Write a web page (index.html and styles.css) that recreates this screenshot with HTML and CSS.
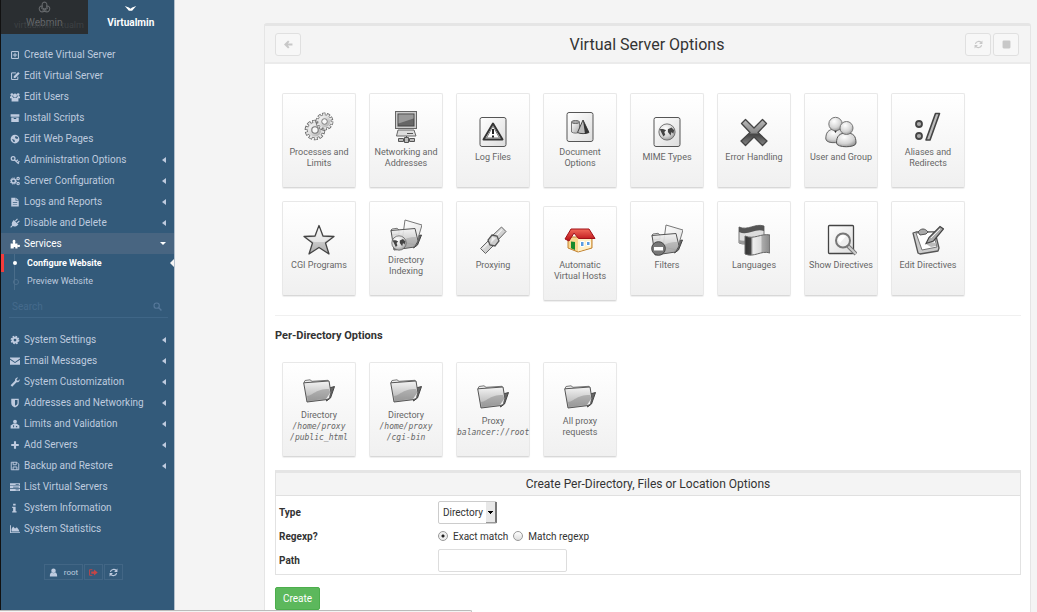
FILE: index.html
```html
<!DOCTYPE html>
<html lang="en">
<head>
<meta charset="utf-8">
<title>Virtual Server Options</title>
<link rel="stylesheet" href="styles.css">
</head>
<body>
<svg class="defs" aria-hidden="true">
  <defs>
    <linearGradient id="metal" x1="0" y1="0" x2="1" y2="1"><stop offset="0" stop-color="#fff"/><stop offset="1" stop-color="#aaa"/></linearGradient>
    <linearGradient id="paper" x1="0" y1="0" x2="1" y2="1"><stop offset="0" stop-color="#fff"/><stop offset="1" stop-color="#ddd"/></linearGradient>
    <linearGradient id="dark" x1="0" y1="0" x2="0" y2="1"><stop offset="0" stop-color="#bbb"/><stop offset=".5" stop-color="#888"/><stop offset=".58" stop-color="#444"/><stop offset="1" stop-color="#888"/></linearGradient>
    <linearGradient id="roof" x1="0" y1="0" x2="0" y2="1"><stop offset="0" stop-color="#f26a5a"/><stop offset="1" stop-color="#b80d14"/></linearGradient>
    <linearGradient id="flag" x1="0" y1="0" x2="1" y2="0"><stop offset="0" stop-color="#333"/><stop offset=".22" stop-color="#444"/><stop offset=".32" stop-color="#eee"/><stop offset=".62" stop-color="#ddd"/><stop offset=".7" stop-color="#aaa"/><stop offset="1" stop-color="#888"/></linearGradient>
    <radialGradient id="ball" cx=".4" cy=".3" r=".8"><stop offset="0" stop-color="#fff"/><stop offset=".6" stop-color="#d4d4d4"/><stop offset="1" stop-color="#888"/></radialGradient>
    <linearGradient id="folderfill" x1="0" y1="0" x2="0" y2="1"><stop offset="0" stop-color="#f4f4f4"/><stop offset="1" stop-color="#aaa"/></linearGradient>
  </defs>
  <symbol id="plus-square" viewBox="0 0 16 16"><path fill="none" stroke="currentColor" stroke-width="1.6" d="M2.5 2.5h11v11h-11zM8 4.5v7M4.5 8h7"/></symbol>
  <symbol id="edit" viewBox="0 0 16 16"><path fill="none" stroke="currentColor" stroke-width="1.6" d="M9.500 3H2.500v10.500h10V9"/><path fill="currentColor" d="M6 8.500l7-7 2.500 2.500-7 7H6z"/></symbol>
  <symbol id="users" viewBox="0 0 16 16"><circle cx="3" cy="4" r="2.200" fill="currentColor"/><circle cx="13" cy="4" r="2.200" fill="currentColor"/><circle cx="8" cy="5.500" r="3.200" fill="currentColor"/><path fill="currentColor" d="M0 10V7.500L2 6l2.500 1.500L5 9h6l.5-1.500L14 6l2 1.500V10h-2.500v5h-11v-5z"/></symbol>
  <symbol id="archive" viewBox="0 0 16 16"><path fill="currentColor" d="M1 2h14v4H1zM2 7h12v7.500H2zm4 1v1.500h4V8z" fill-rule="evenodd"/></symbol>
  <symbol id="globe" viewBox="0 0 16 16"><path fill="currentColor" fill-rule="evenodd" d="M8 1a7 7 0 100 14A7 7 0 008 1zm1 2l4 2-1 3-3-1-1-2zM3 8l4 1 1 3-2 1z"/></symbol>
  <symbol id="key" viewBox="0 0 16 16"><circle cx="5" cy="5.500" r="3" fill="none" stroke="currentColor" stroke-width="2"/><path fill="none" stroke="currentColor" stroke-width="2" d="M7 7.500l7 6.500M10 10l2.500-2.500M12.500 12.500L15 10"/></symbol>
  <symbol id="cogs" viewBox="0 0 16 16"><circle cx="5.500" cy="8" r="3.300" fill="none" stroke="currentColor" stroke-width="2.400"/><circle cx="5.500" cy="8" r="5" fill="none" stroke="currentColor" stroke-width="1.500" stroke-dasharray="2 1.900"/><circle cx="13" cy="4" r="1.900" fill="none" stroke="currentColor" stroke-width="1.800"/><circle cx="13" cy="12" r="1.900" fill="none" stroke="currentColor" stroke-width="1.800"/></symbol>
  <symbol id="file" viewBox="0 0 16 16"><path fill="currentColor" fill-rule="evenodd" d="M2 1h7v5h5v9H2zm8 0l4 4h-4zM4.500 8v1h7V8zm0 3v1h7v-1z"/></symbol>
  <symbol id="plug" viewBox="0 0 16 16"><path fill="none" stroke="currentColor" stroke-width="1.800" d="M1 15l4-4M8.500 5L12 1.500M11.500 8L15 4.500"/><path fill="currentColor" d="M6 3l7.500 7.500-1.500 1c-3 3-6 2.500-8 1-1.500-2-2-5 1-8z"/></symbol>
  <symbol id="puzzle" viewBox="0 0 16 16"><path fill="currentColor" d="M1 7h4c-1.500-3-1-6 1.500-6S9 4 8 7h4v3c2-1.500 4-1 4 1s-2 2.500-4 1v3H8.500c1-3-3.500-3-2.500 0H1z"/></symbol>
  <symbol id="search" viewBox="0 0 16 16"><circle cx="6.500" cy="6.500" r="4.700" fill="none" stroke="currentColor" stroke-width="2"/><path stroke="currentColor" stroke-width="2.500" d="M10 10l5 5"/></symbol>
  <symbol id="cog" viewBox="0 0 16 16"><circle cx="8" cy="8" r="3.800" fill="none" stroke="currentColor" stroke-width="3.200"/><circle cx="8" cy="8" r="6" fill="none" stroke="currentColor" stroke-width="2" stroke-dasharray="2.700 2.012"/></symbol>
  <symbol id="envelope" viewBox="0 0 16 16"><path fill="currentColor" d="M0 2.500h16V4L8 9.500 0 4zM0 5.800l8 5.500 8-5.500V14H0z"/></symbol>
  <symbol id="wrench" viewBox="0 0 16 16"><path fill="currentColor" d="M1 13l7-7c-.5-3 2-5.500 5-5L10.500 3.500l.5 2 2 .5L15.500 3.500c.5 3-2 5.500-5 5L3.500 15.500z"/></symbol>
  <symbol id="shield" viewBox="0 0 16 16"><path fill="currentColor" fill-rule="evenodd" d="M2 1h12v7c0 4-3 6-6 7-3-1-6-3-6-7zm6 2v9.500c2-1 4-2 4-4.500V3z"/></symbol>
  <symbol id="limits" viewBox="0 0 16 16"><circle cx="8" cy="4" r="3" fill="currentColor"/><path fill="currentColor" fill-rule="evenodd" d="M6 7h4l5 3.500V15H1v-4.500zM5 10v3h1.500v-3zm4.500 1v2h2v-2z"/></symbol>
  <symbol id="plus" viewBox="0 0 16 16"><path fill="currentColor" d="M6.300 2h3.400v4.300H14v3.400H9.700V14H6.300V9.700H2V6.300h4.300z"/></symbol>
  <symbol id="save" viewBox="0 0 16 16"><path fill="none" stroke="currentColor" stroke-width="1.500" d="M2 2h9l3 3v9H2zM5 2v4h5V2M5 14V9.500h6V14"/></symbol>
  <symbol id="server" viewBox="0 0 16 16"><path fill="currentColor" fill-rule="evenodd" d="M0 2h16v3.500H0zm9 1v1.200h5V3zM0 6.500h16V10H0zm5 1v1.200h9V7.500zM0 11h16v3.500H0zm9 1v1.200h5V12z"/></symbol>
  <symbol id="info" viewBox="0 0 16 16"><path fill="currentColor" d="M5 1h4v3H5zM3.500 6H9v7h1.500v2h-7v-2H5V8H3.500z"/></symbol>
  <symbol id="area" viewBox="0 0 16 16"><path fill="currentColor" d="M0 2h1.500v11H16v1.500H0zM2.500 12V8L5 4l3 3 3-2 3 4 1 3z"/></symbol>
  <symbol id="user" viewBox="0 0 16 16"><circle cx="8" cy="5" r="4" fill="currentColor"/><path fill="currentColor" d="M1.500 15c0-4 1-7 3.500-7 2 1.500 4 1.500 6 0 2.500 0 3.500 3 3.500 7z"/></symbol>
  <symbol id="signout" viewBox="0 0 16 16"><path fill="none" stroke="currentColor" stroke-width="1.600" d="M6 3H1v10h5"/><path fill="currentColor" d="M4 6h5V2.500L15.500 8 9 13.500V10H4z"/></symbol>
  <symbol id="refresh" viewBox="0 0 16 16"><path fill="none" stroke="currentColor" stroke-width="2" d="M2.500 7C3.500 2 10 1 13 4.500M13.500 9C12.500 14 6 15 3 11.500"/><path fill="currentColor" d="M15 1v6H9zM1 15V9h6z"/></symbol>
  <symbol id="arrow-left" viewBox="0 0 16 16"><path fill="none" stroke="currentColor" stroke-width="3.600" d="M8.500 2L2.500 8l6 6M3 8h12"/></symbol>
  <symbol id="webmin" viewBox="0 0 24 24"><path fill="none" stroke="currentColor" stroke-width="2" d="M12 2c-4 0-5 4-4 7-5 0-7 4-5 8 2 4 6 4 9 1 3 3 7 3 9-1 2-4 0-8-5-8 1-3 0-7-4-7zM8 9c0 3-2 5-2 5M16 9c0 3 2 5 2 5M8 13l8 4M16 13l-8 4"/></symbol>
  <symbol id="gear" viewBox="0 0 24 24"><g fill="none"><circle cx="12" cy="12" r="9" pathLength="40" stroke="#666" stroke-width="4.500" stroke-dasharray="2.800 1.200"/><circle cx="12" cy="12" r="8.500" fill="#e2e2e2" stroke="#777"/><circle cx="12" cy="12" r="8.700" pathLength="40" stroke="#e4e4e4" stroke-width="3.300" stroke-dasharray="1.800 2.200" stroke-dashoffset="-.5"/><circle cx="12" cy="12" r="7" fill="url(#metal)"/><circle cx="12" cy="12" r="3.500" fill="#f8f8f8" stroke="#777" stroke-width="1.200"/></g></symbol>
  <symbol id="folder" viewBox="0 0 32 32"><path fill="#666" stroke="#444" d="M26 14l5.500-1.500-4 11.500-4 3z"/><path fill="#eee" stroke="#777" d="M1 8.500l1-2 5-.7 2 1.500 16-1 1 3L4 11z"/><path fill="url(#folderfill)" stroke="#555" d="M.7 8.800L26 7l2 12-3.500 6.500L4 28z"/><path fill="#777" opacity=".4" d="M4 22c7-1 8-7 22-7l1.500 4-3 5.500L5 27z"/><path fill="#eee" d="M27 19l-1 5-3 1z"/></symbol>
  <symbol id="folder-doc" viewBox="0 0 32 32"><path fill="#666" stroke="#444" d="M26 17l5.500-1-4 10-4 3z"/><path fill="url(#paper)" stroke="#777" d="M15 1l17 5-6 20-14-3z"/><path fill="#eee" stroke="#777" d="M1 11l1-1 5-.7 2 1.700v4l-7 1z"/><path fill="url(#folderfill)" fill-opacity=".9" stroke="#555" d="M1 11.500L25 9.500l3 12.500-3.500 6L4 31z"/><path fill="#888" opacity=".35" d="M4 26c7-1 8-8 22-8l1.500 4-3 5.500L5 30z"/></symbol>
  <symbol id="globe-ball" viewBox="0 0 20 20"><circle cx="10" cy="10" r="9" fill="url(#ball)" stroke="#666"/><path fill="#444" d="M2 7c3-1 5 0 7 1l-2 2 1 3-2 2-2-4zM11 7l4-2 3 3-1 4-2-2-1 4-3-4z"/></symbol>
</svg>

<div class="app">
  <aside class="sidebar">
    <div class="tabs">
      <a class="tab tab-off" href="#"><svg class="tab-icon"><use href="#webmin"/></svg><span>Webmin</span><span class="ghost" aria-hidden="true">virtualmin...tualm</span></a>
      <a class="tab tab-on" href="#"><svg class="tab-icon" viewBox="0 0 16 16"><path fill="currentColor" d="M1 6l5 2 2 1.500L10 8l5-2-5 6H6z"/></svg><span>Virtualmin</span></a>
    </div>
    <nav class="menu">
      <a class="item" href="#"><svg><use href="#plus-square"/></svg>Create Virtual Server</a>
      <a class="item" href="#"><svg><use href="#edit"/></svg>Edit Virtual Server</a>
      <a class="item" href="#"><svg><use href="#users"/></svg>Edit Users</a>
      <a class="item" href="#"><svg><use href="#archive"/></svg>Install Scripts</a>
      <a class="item" href="#"><svg><use href="#globe"/></svg>Edit Web Pages</a>
      <a class="item more" href="#"><svg><use href="#key"/></svg>Administration Options</a>
      <a class="item more" href="#"><svg><use href="#cogs"/></svg>Server Configuration</a>
      <a class="item more" href="#"><svg><use href="#file"/></svg>Logs and Reports</a>
      <a class="item more" href="#"><svg><use href="#plug"/></svg>Disable and Delete</a>
      <a class="item open" href="#"><svg><use href="#puzzle"/></svg>Services</a>
      <div class="submenu">
        <a class="sub current" href="#">Configure Website<svg class="notch" viewBox="0 0 4 8"><path fill="#f4f4f4" d="M4 0v8L0 4z"/></svg></a>
        <a class="sub" href="#">Preview Website</a>
      </div>
    </nav>
    <div class="search"><input type="text" placeholder="Search" aria-label="Search"><svg><use href="#search"/></svg></div>
    <nav class="menu">
      <a class="item more" href="#"><svg><use href="#cog"/></svg>System Settings</a>
      <a class="item more" href="#"><svg><use href="#envelope"/></svg>Email Messages</a>
      <a class="item more" href="#"><svg><use href="#wrench"/></svg>System Customization</a>
      <a class="item more" href="#"><svg><use href="#shield"/></svg>Addresses and Networking</a>
      <a class="item more" href="#"><svg><use href="#limits"/></svg>Limits and Validation</a>
      <a class="item more" href="#"><svg><use href="#plus"/></svg>Add Servers</a>
      <a class="item more" href="#"><svg><use href="#save"/></svg>Backup and Restore</a>
      <a class="item" href="#"><svg><use href="#server"/></svg>List Virtual Servers</a>
      <a class="item" href="#"><svg><use href="#info"/></svg>System Information</a>
      <a class="item" href="#"><svg><use href="#area"/></svg>System Statistics</a>
    </nav>
    <div class="session">
      <a href="#"><svg><use href="#user"/></svg>root</a>
      <a class="logout" href="#" aria-label="Log out"><svg><use href="#signout"/></svg></a>
      <a href="#" aria-label="Refresh"><svg><use href="#refresh"/></svg></a>
    </div>
  </aside>

  <main class="content">
    <section class="panel">
      <header class="panel-head">
        <div class="tools"><button type="button" aria-label="Back"><svg><use href="#arrow-left"/></svg></button></div>
        <h1>Virtual Server Options</h1>
        <div class="tools right"><button type="button" aria-label="Reload"><svg><use href="#refresh"/></svg></button><button type="button" aria-label="Stop"><svg viewBox="0 0 16 16"><rect x="1" y="1" width="14" height="14" rx="2" fill="currentColor"/></svg></button></div>
      </header>
      <div class="panel-body">
        <div class="cards">
          <a class="card" href="#"><svg viewBox="0 0 32 32"><use href="#gear" x="1" y="8" width="22" height="22"/><use href="#gear" x="12" y="1" width="19" height="19"/></svg><span>Processes and Limits</span></a>
          <a class="card" href="#"><svg viewBox="0 0 32 32"><rect x="5.500" y=".5" width="21" height="17" fill="#ccc" stroke="#666"/><rect x="8" y="3" width="16" height="12" fill="#666" stroke="#444"/><path fill="#999" d="M8.500 3.500h15v4l-15 5z"/><path fill="#ddd" stroke="#666" d="M8 19h16l2 6H6.500z"/><path stroke="#555" d="M17 22.500h6"/><path fill="#bbb" stroke="#555" d="M8.500 27.500h5v3h-5zM19.500 27.500h5v3h-5zM14.500 26.500h4v5h-4zM13 29h2M18 29h2M16.500 25v2"/></svg><span>Networking and Addresses</span></a>
          <a class="card" href="#"><svg viewBox="0 0 32 32"><rect x="3" y="1.500" width="26" height="29" rx="2" fill="url(#paper)" stroke="#555"/><path fill="#fff" stroke="#333" stroke-width="2" stroke-linejoin="round" d="M16 7.500l9.500 16h-19z"/><path stroke="#777" fill="none" d="M16 10l6.500 12h-13z"/><path stroke="#222" stroke-width="2" d="M16 13v5M16 19.500v2"/></svg><span>Log Files</span></a>
          <a class="card" href="#"><svg viewBox="0 0 32 32"><rect x="3" y="1.500" width="26" height="29" rx="2" fill="url(#paper)" stroke="#555"/><path fill="url(#metal)" stroke="#777" d="M7.500 11v10c2 1.500 6 1.500 8 0V11"/><ellipse cx="11.500" cy="11" rx="4" ry="1.500" fill="#aaa" stroke="#666"/><path fill="#bbb" stroke="#444" d="M19 9l6 12.500c-3 1.500-9 1.500-11.500 0z"/><path fill="#333" d="M19 9l2 14 4-1.500z"/></svg><span>Document Options</span></a>
          <a class="card" href="#"><svg viewBox="0 0 32 32"><rect x="3" y="1.500" width="26" height="29" rx="2" fill="url(#paper)" stroke="#555"/><use href="#globe-ball" x="7" y="7" width="18" height="18"/></svg><span>MIME Types</span></a>
          <a class="card" href="#"><svg viewBox="0 0 32 32"><path fill="url(#dark)" stroke="#444" stroke-width="1.300" stroke-linejoin="round" d="M7.500 3.500L16 12l8.500-8.500 4 4L20 16.500l9 8.500-4.500 4.500-8.500-8.500-8.500 8.500L3 25l9-8.500-8.500-9z"/></svg><span>Error Handling</span></a>
          <a class="card" href="#"><svg viewBox="0 0 32 32"><path fill="url(#ball)" stroke="#666" d="M.8 23c0-6 2-10 9.700-10s9 4 9 9-18 7-18.700 1z"/><path fill="#222" d="M8 13h5l-2.500 4z"/><circle cx="10.500" cy="8" r="6.700" fill="url(#ball)" stroke="#777"/><path fill="url(#ball)" stroke="#555" d="M11.500 27c0-7 3-10 10-10s9.500 3 9.500 10c0 5-19.500 5-19.500 0z"/><circle cx="21.500" cy="12" r="6.500" fill="url(#ball)" stroke="#777"/></svg><span>User and Group</span></a>
          <a class="card" href="#"><svg viewBox="0 0 32 32"><circle cx="7" cy="13" r="3" fill="#aaa" stroke="#444" stroke-width="1.800"/><circle cx="7" cy="25" r="3" fill="#aaa" stroke="#444" stroke-width="1.800"/><path fill="#bbb" stroke="#444" stroke-width="1.600" stroke-linejoin="round" d="M23.500 2.500h4L18 29h-4z"/></svg><span>Aliases and Redirects</span></a>
          <a class="card" href="#"><svg viewBox="0 0 32 32"><path fill="url(#folderfill)" stroke="#444" stroke-width="1.300" stroke-linejoin="round" d="M16 1.500l4 10.500 11 .5-8.500 6.500 3.500 11-10-6.500L6 30l3.500-11L1 12.500 12 12z"/><path fill="#fff" opacity=".5" d="M16 4l3 9 9 .7-7 4.300H11l-7-4.300 9-.7z"/></svg><span>CGI Programs</span></a>
          <a class="card" href="#"><svg viewBox="0 0 32 32"><use href="#folder-doc"/><use href="#globe-ball" x="1" y="16" width="16" height="16"/></svg><span>Directory Indexing</span></a>
          <a class="card" href="#"><svg viewBox="0 0 32 32"><path fill="url(#metal)" stroke="#666" d="M24.500 3l4.500 4.500L20 17l-5-5zM12 16l5 5-8.500 8.500-5-5z"/><path stroke="#fff" d="M25 5.500L19 12M11.500 19L6 24.500"/><path fill="#ccc" stroke="#555" stroke-width="1.300" d="M15 11l5 1 2 5-4 5-5-1-2-5z"/><path fill="#eee" d="M15 13l4 1-5 5z"/></svg><span>Proxying</span></a>
          <a class="card card-low" href="#"><svg viewBox="0 0 32 32"><path fill="#f9d58d" stroke="#c08030" d="M4 13v11l10 4 14-4V13z"/><path fill="#fff0c8" d="M14 14h13v9.500L14 27.500z"/><path fill="#168a2c" d="M7 17.500l4 .5v8l-4-1.700z"/><path fill="#5b9de0" stroke="#fff" d="M16.500 17.500h3.500v5h-3.500zM22.500 17.500H26v4h-3.500z"/><path fill="url(#roof)" stroke="#a01018" d="M7 5h18l6 9.500H14.500L10 9l-5 8-4-2z"/></svg><span>Automatic Virtual Hosts</span></a>
          <a class="card" href="#"><svg viewBox="0 0 32 32"><use href="#folder-doc"/><circle cx="7.500" cy="24.500" r="6.800" fill="#777" stroke="#444"/><path fill="#fff" d="M3 23h9v3.500H3z"/></svg><span>Filters</span></a>
          <a class="card" href="#"><svg viewBox="0 0 32 32"><path fill="#ddd" stroke="#777" d="M1 3c9 4 16-4 25-1v15c-9-3-16 6-25 2z"/><path fill="#555" d="M1 3c9 4 16-4 25-1v5c-9-3-16 5-25 1z"/><path fill="#999" d="M1 16c9 3 16-5 25-2v3c-9-3-16 6-25 2z"/><path fill="url(#flag)" stroke="#666" d="M7 12c9 4 16-3 25-1v18c-9-3-16 5-25 1z"/></svg><span>Languages</span></a>
          <a class="card" href="#"><svg viewBox="0 0 32 32"><rect x="3.500" y="1.500" width="25" height="28" rx="1" fill="url(#paper)" stroke="#444" stroke-width="1.300"/><path stroke="#777" stroke-width="4" d="M23 22l8 8"/><path stroke="#ccc" stroke-width="2" d="M23 22l8 8"/><circle cx="18" cy="16.500" r="7" fill="#eee" stroke="#777" stroke-width="2"/><path fill="#fff" d="M13 16a5 5 0 015-5l3 1-6 7z"/></svg><span>Show Directives</span></a>
          <a class="card" href="#"><svg viewBox="0 0 32 32"><path fill="#ccc" stroke="#555" stroke-width="1.300" stroke-linejoin="round" d="M1 9l3-1h19l4 16-1 3-18 3-2-1z"/><path fill="#fff" stroke="#777" d="M4 9l17-1 4 15-15 3z"/><path fill="#aaa" stroke="#555" d="M6 8c3-4 7-4 10 0l-2 2-6 1z"/><path fill="#bbb" d="M14 20l5-2 5 1v3l-5 1z"/><path fill="#aaa" stroke="#444" stroke-width="1.200" d="M14 19.500l3-6L28 2.500l3.500 2.500-10 12z"/><path stroke="#eee" d="M19 14l9-9"/></svg><span>Edit Directives</span></a>
        </div>
        <hr>
        <h2>Per-Directory Options</h2>
        <div class="cards">
          <a class="card" href="#"><svg><use href="#folder"/></svg><span>Directory <em>/home/proxy /public_html</em></span></a>
          <a class="card" href="#"><svg><use href="#folder"/></svg><span>Directory <em>/home/proxy /cgi-bin</em></span></a>
          <a class="card" href="#"><svg><use href="#folder"/></svg><span>Proxy <em>balancer://root</em></span></a>
          <a class="card" href="#"><svg><use href="#folder"/></svg><span>All proxy requests</span></a>
        </div>
        <form class="form">
          <section class="box" aria-labelledby="box-title">
            <h3 id="box-title">Create Per-Directory, Files or Location Options</h3>
            <div class="fields">
              <label class="name" for="type">Type</label>
              <div><span class="select"><select id="type"><option>Directory</option></select></span></div>
              <span class="name" id="regexp">Regexp?</span>
              <div class="radios" role="radiogroup" aria-labelledby="regexp">
                <label><input type="radio" name="regexp" checked>Exact match</label>
                <label><input type="radio" name="regexp">Match regexp</label>
              </div>
              <label class="name" for="path">Path</label>
              <div><input class="text" id="path" type="text"></div>
            </div>
          </section>
          <button class="create" type="button">Create</button>
        </form>
      </div>
    </section>
  </main>
</div>
<div class="status"></div>
</body>
</html>
```
FILE: styles.css
```css
* { box-sizing: border-box; }
html, body { height: 100%; }
body {
  margin: 0;
  overflow: hidden;
  background: #f4f4f4;
  color: #333;
  font: 10px/15px Roboto, "Liberation Sans", sans-serif;
}
a { color: inherit; text-decoration: none; }
.defs { position: absolute; width: 0; height: 0; }
.app { display: flex; min-height: 100vh; }

/* Sidebar */
.sidebar {
  flex: none;
  width: 175px;
  border-left: 1px solid #111;
  border-right: 1px solid #b4c0cc;
  background: #335a7a;
  color: #bfcbdf;
}
.tabs { display: flex; height: 34px; }
.tab {
  position: relative;
  flex: 1;
  display: flex;
  flex-direction: column;
  align-items: center;
  padding-top: 1px;
  gap: 1px;
}
.tab-icon { width: 13px; height: 13px; }
.tab-off { background: #2a2e31; color: #65686b; }
.tab-on { color: #fff; font-weight: 700; }
.ghost { position: absolute; left: 13px; top: 18px; font-size: 9px; color: #3d4144; }
.menu { display: flex; flex-direction: column; }
.tabs + .menu { padding-top: 10px; }
.item {
  display: flex;
  align-items: center;
  gap: 4px;
  height: 21px;
  padding: 0 8px 0 9px;
}
.item svg { width: 10px; height: 10px; }
.more::after, .open::after {
  content: "";
  margin-left: auto;
  border: 3px solid transparent;
}
.more::after { border-right: 4px solid #bfcbdf; border-left: 0; }
.open::after { border-top-color: #fff; border-bottom: 0; }
.open { background: #486581; color: #fff; }
.submenu { display: flex; flex-direction: column; }
.sub {
  position: relative;
  height: 18px;
  padding-left: 26px;
  font-size: 9px;
  line-height: 18px;
}
.sub::before {
  content: "";
  position: absolute;
  left: 13px;
  top: 0;
  bottom: 0;
  border-left: 1px solid #4a6d8a;
}
.sub::after {
  content: "";
  position: absolute;
  left: 12px;
  top: 7px;
  width: 4px;
  height: 4px;
  border: 1px solid #4f718f;
  border-radius: 50%;
}
.current {
  color: #fff;
  font-weight: 700;
  background: linear-gradient(#f33c3c, #f33c3c) left / 3px 100% no-repeat;
}
.current::after { border: 0; background: #fff; }
.notch { position: absolute; right: 0; top: 5px; width: 4px; height: 8px; }
.search {
  display: flex;
  align-items: center;
  justify-content: space-between;
  height: 22px;
  margin: 6px 6px 11px 8px;
  padding: 0 6px 0 3px;
  border-bottom: 1px solid #3f6687;
  color: #56789a;
}
.search input {
  width: 120px;
  padding: 0;
  border: 0;
  background: none;
  color: inherit;
  font: inherit;
}
.search input::placeholder { color: #456a8c; opacity: 1; }
.search svg { width: 9px; height: 9px; }
.session {
  display: flex;
  justify-content: center;
  gap: 1px;
  margin: 25px 8px 0 0;
  font-size: 8px;
}
.session a {
  display: flex;
  align-items: center;
  gap: 6px;
  height: 16px;
  padding: 0 4px;
  border: 1px solid #426685;
}
.session svg { width: 9px; height: 9px; }
.logout { color: #c64545; }

/* Main panel */
.content { flex: 1; display: flex; padding: 23px 6px 0 89px; }
.panel {
  flex: 1;
  border: 1px solid #e5e5e5;
  border-top: 3px solid #e5e5e5;
  border-bottom: 0;
  border-radius: 3px 3px 0 0;
  background: #fff;
}
.panel-head {
  display: flex;
  align-items: center;
  height: 38px;
  padding: 0 11px 0 10px;
  border-bottom: 2px solid #ebebeb;
  background: #f4f4f4;
}
.panel-head h1 {
  flex: 1;
  margin: 0;
  text-align: center;
  font-size: 16px;
  font-weight: 400;
}
.tools { display: flex; gap: 2px; width: 54px; }
.right { justify-content: flex-end; }
.tools button {
  display: grid;
  place-items: center;
  width: 26px;
  height: 23px;
  padding: 0;
  border: 1px solid #e0e0e0;
  border-radius: 3px;
  background: #f7f7f7;
  color: #c8c8c8;
}
.tools svg { width: 9px; height: 9px; }
.panel-body { padding: 29px 9px 0 10px; }
.cards { display: flex; flex-wrap: wrap; align-items: flex-start; gap: 13px; padding-left: 7px; }
.card {
  display: flex;
  flex-direction: column;
  align-items: center;
  justify-content: center;
  gap: 4px;
  width: 74px;
  height: 95px;
  padding-bottom: 2px;
  border: 1px solid #e8e8e8;
  border-bottom-color: #d8d8d8;
  border-radius: 2px;
  background: linear-gradient(#fff, #f0f0f0);
  box-shadow: 0 1px 1px #eee;
  color: #666;
  font-size: 9px;
  line-height: 11px;
  text-align: center;
}
.card-low { margin-top: 5px; }
.card svg { width: 32px; height: 32px; }
.card span { width: 72px; padding: 0 2px; }
.card em {
  display: block;
  margin: 0 -2px;
  font: italic 8px/11px "DejaVu Sans Mono", "Liberation Mono", monospace;
}
hr { margin: 14px 0 0; border: 0; border-top: 1px solid #f0f0f0; }
h2 { margin: 12px 0 19px; font-size: 11px; line-height: 15px; font-weight: 700; }
.form { margin-top: 13px; }
.box {
  margin: 0 0 12px;
  border: 1px solid #e2e2e2;
  border-top: 3px solid #e5e5e5;
}
h3 {
  margin: 0;
  border-bottom: 1px solid #e0e0e0;
  background: #f4f4f4;
  font-size: 12px;
  line-height: 22px;
  font-weight: 400;
  text-align: center;
}
.fields {
  display: grid;
  grid-template-columns: 159px 1fr;
  grid-auto-rows: 24px;
  align-items: center;
  padding: 4px 3px 2px;
}
.name { font-weight: 700; }
.select { position: relative; display: inline-block; vertical-align: middle; }
.select select {
  appearance: none;
  display: block;
  width: 59px;
  height: 23px;
  padding: 0 4px;
  border: 1px solid #ccc;
  border-radius: 2px;
  background: #fff;
  color: #333;
  font: inherit;
}
.select::after {
  content: "";
  position: absolute;
  top: 1px;
  right: 0;
  bottom: 1px;
  width: 9px;
  border-right: 2px solid #777;
  border-bottom: 1px solid #999;
  background:
    linear-gradient(#000, #000) 2px 9px / 5px 1px no-repeat,
    linear-gradient(#000, #000) 3px 10px / 3px 1px no-repeat,
    linear-gradient(#000, #000) 4px 11px / 1px 1px no-repeat,
    #e8e8e8;
  pointer-events: none;
}
.radios { display: flex; gap: 5px; }
.radios label { display: flex; align-items: center; gap: 5px; }
.radios input {
  appearance: none;
  width: 10px;
  height: 10px;
  margin: 0;
  border: 1px solid #999;
  border-radius: 50%;
  background: linear-gradient(#fff, #ddd);
}
.radios input:checked { background: radial-gradient(#222 0 1px, #eee 2px); }
.text {
  display: block;
  width: 129px;
  height: 23px;
  padding: 0 4px;
  border: 1px solid #ddd;
  border-radius: 2px;
  font: inherit;
}
.create {
  height: 23px;
  padding: 0 7px;
  border: 1px solid #4cae4c;
  border-radius: 2px;
  background: #5cb85c;
  color: #fff;
  font: inherit;
}
.status {
  position: fixed;
  left: 0;
  bottom: 0;
  width: 472px;
  height: 2px;
  border: 1px solid #bbb;
  border-width: 1px 1px 0 0;
  border-radius: 0 3px 0 0;
  background: #f4f4f4;
}
```
